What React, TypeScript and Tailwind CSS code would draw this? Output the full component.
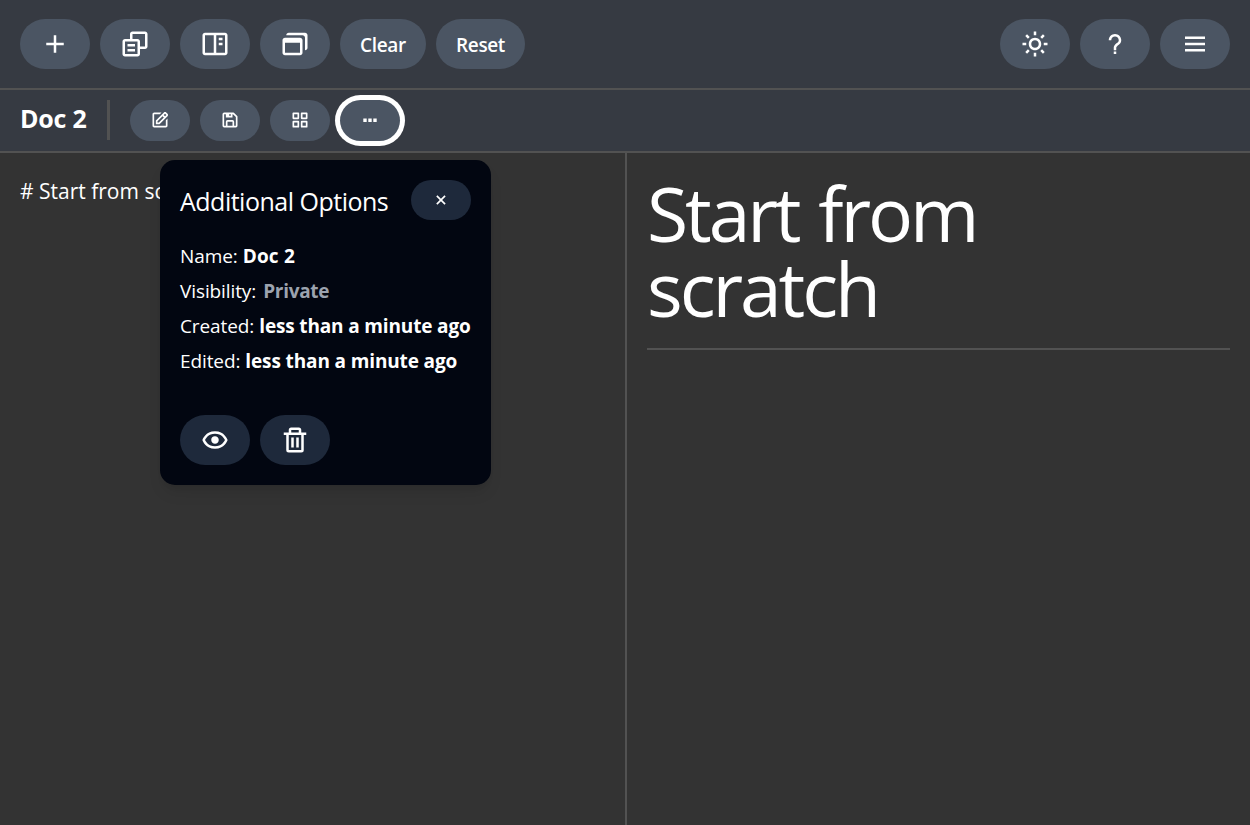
import type { ReactNode } from "react";
import {
  BiPlus, BiCopyAlt, BiBookContent, BiWindows, BiSun, BiQuestionMark, BiMenu,
  BiEdit, BiSave, BiGridAlt, BiX, BiShow, BiTrash,
} from "react-icons/bi";

function ToolButton({ children, label, className = "w-[70px] bg-[#4b5563]" }: { children: ReactNode; label: string; className?: string }) {
  return (
    <button aria-label={label} className={`flex h-[50px] items-center justify-center rounded-[30px] ${className}`}>
      {children}
    </button>
  );
}

function SmallButton({ children, label, className = "" }: { children: ReactNode; label: string; className?: string }) {
  return (
    <button aria-label={label} className={`flex h-[41px] w-[60px] items-center justify-center rounded-[30px] bg-[#4b5563] ${className}`}>
      {children}
    </button>
  );
}

function DotsIcon() {
  return (
    <svg width="20" height="20" viewBox="0 0 20 20" fill="currentColor">
      <rect x="3.3" y="7.5" width="3.4" height="3.4" rx="0.2" />
      <rect x="8.3" y="7.5" width="3.4" height="3.4" rx="0.2" />
      <rect x="13.3" y="7.5" width="3.4" height="3.4" rx="0.2" />
    </svg>
  );
}

function Detail({ name, children }: { name: string; children: ReactNode }) {
  return (
    <p className="flex h-[35px] items-center whitespace-nowrap">
      <span className="mr-[5px] tracking-[-0.1px]">{name}:</span>
      {children}
    </p>
  );
}

export default function App() {
  return (
    <div className="flex h-[825px] w-[1250px] flex-col overflow-hidden bg-[#333333] font-['Open_Sans','Noto_Sans',sans-serif] text-[19px] text-white">
      <header className="flex h-[90px] shrink-0 items-center justify-between border-b-2 border-[#525252] bg-[#363a42] px-5">
        <div className="flex gap-2.5">
          <ToolButton label="New"><BiPlus size={30} /></ToolButton>
          <ToolButton label="Copy"><BiCopyAlt size={30} /></ToolButton>
          <ToolButton label="Layout"><BiBookContent size={30} /></ToolButton>
          <ToolButton label="Windows"><BiWindows size={30} /></ToolButton>
          <ToolButton label="Clear" className="w-[86px] bg-[#4b5563] font-semibold"><span className="pt-0.5 text-[19px] tracking-[-0.3px]">Clear</span></ToolButton>
          <ToolButton label="Reset" className="w-[89px] bg-[#4b5563] font-semibold"><span className="pt-0.5 text-[19px] tracking-[-0.4px]">Reset</span></ToolButton>
        </div>
        <div className="flex gap-2.5">
          <ToolButton label="Theme"><BiSun size={30} /></ToolButton>
          <ToolButton label="Help"><BiQuestionMark size={30} /></ToolButton>
          <ToolButton label="Menu"><BiMenu size={30} /></ToolButton>
        </div>
      </header>

      <div className="flex h-[63px] shrink-0 items-center border-b-2 border-[#525252] bg-[#363a42] pl-5">
        <h2 className="w-[87px] pb-1 text-[25px] leading-none font-bold tracking-[-0.2px] whitespace-nowrap">Doc 2</h2>
        <div className="mr-5 mb-0.5 h-10 w-[3px] bg-[#525252]" />
        <div className="flex gap-2.5">
          <SmallButton label="Edit"><BiEdit size={20} className="-mt-0.5" /></SmallButton>
          <SmallButton label="Save"><BiSave size={20} className="-mt-0.5" /></SmallButton>
          <SmallButton label="Grid"><BiGridAlt size={20} className="-mt-0.5" /></SmallButton>
          <div className="relative">
            <SmallButton label="More" className="ring-5 ring-white"><DotsIcon /></SmallButton>
            <section className="absolute top-[60px] left-[-180px] z-10 h-[325px] w-[331px] rounded-[15px] bg-[#020611] p-5 shadow-lg">
              <div className="flex justify-between">
                <h3 className="pt-px text-[25px] leading-10 tracking-[-0.5px] whitespace-nowrap">Additional Options</h3>
                <button aria-label="Close" className="flex h-10 w-[60px] items-center justify-center rounded-[30px] bg-[#1e293b]"><BiX size={20} /></button>
              </div>
              <div className="mt-[18px]">
                <Detail name="Name"><b className="tracking-[0.2px]">Doc 2</b></Detail>
                <Detail name="Visibility"><b className="ml-0.5 tracking-[-0.3px] text-[#9ca3af]">Private</b></Detail>
                <Detail name="Created"><b className="tracking-[-0.15px]">less than a minute ago</b></Detail>
                <Detail name="Edited"><b className="tracking-[-0.13px]">less than a minute ago</b></Detail>
              </div>
              <div className="mt-9 flex gap-2.5">
                <ToolButton label="View" className="w-[70px] bg-[#1e293b]"><BiShow size={30} /></ToolButton>
                <ToolButton label="Delete" className="w-[70px] bg-[#1e293b]"><BiTrash size={30} /></ToolButton>
              </div>
            </section>
          </div>
        </div>
      </div>

      <main className="flex flex-1">
        <div className="w-[625px] px-5 pt-[23px] text-[21px] leading-[30px]"># Start from scratch</div>
        <article className="flex-1 border-l-2 border-[#525252] px-5">
          <h1 className="h-[197px] border-b-2 border-[#525252] pt-[23px] text-[75px] leading-[75px] tracking-[-3.1px] [word-spacing:3.5px]">
            Start from<br />scratch
          </h1>
        </article>
      </main>
    </div>
  );
}
